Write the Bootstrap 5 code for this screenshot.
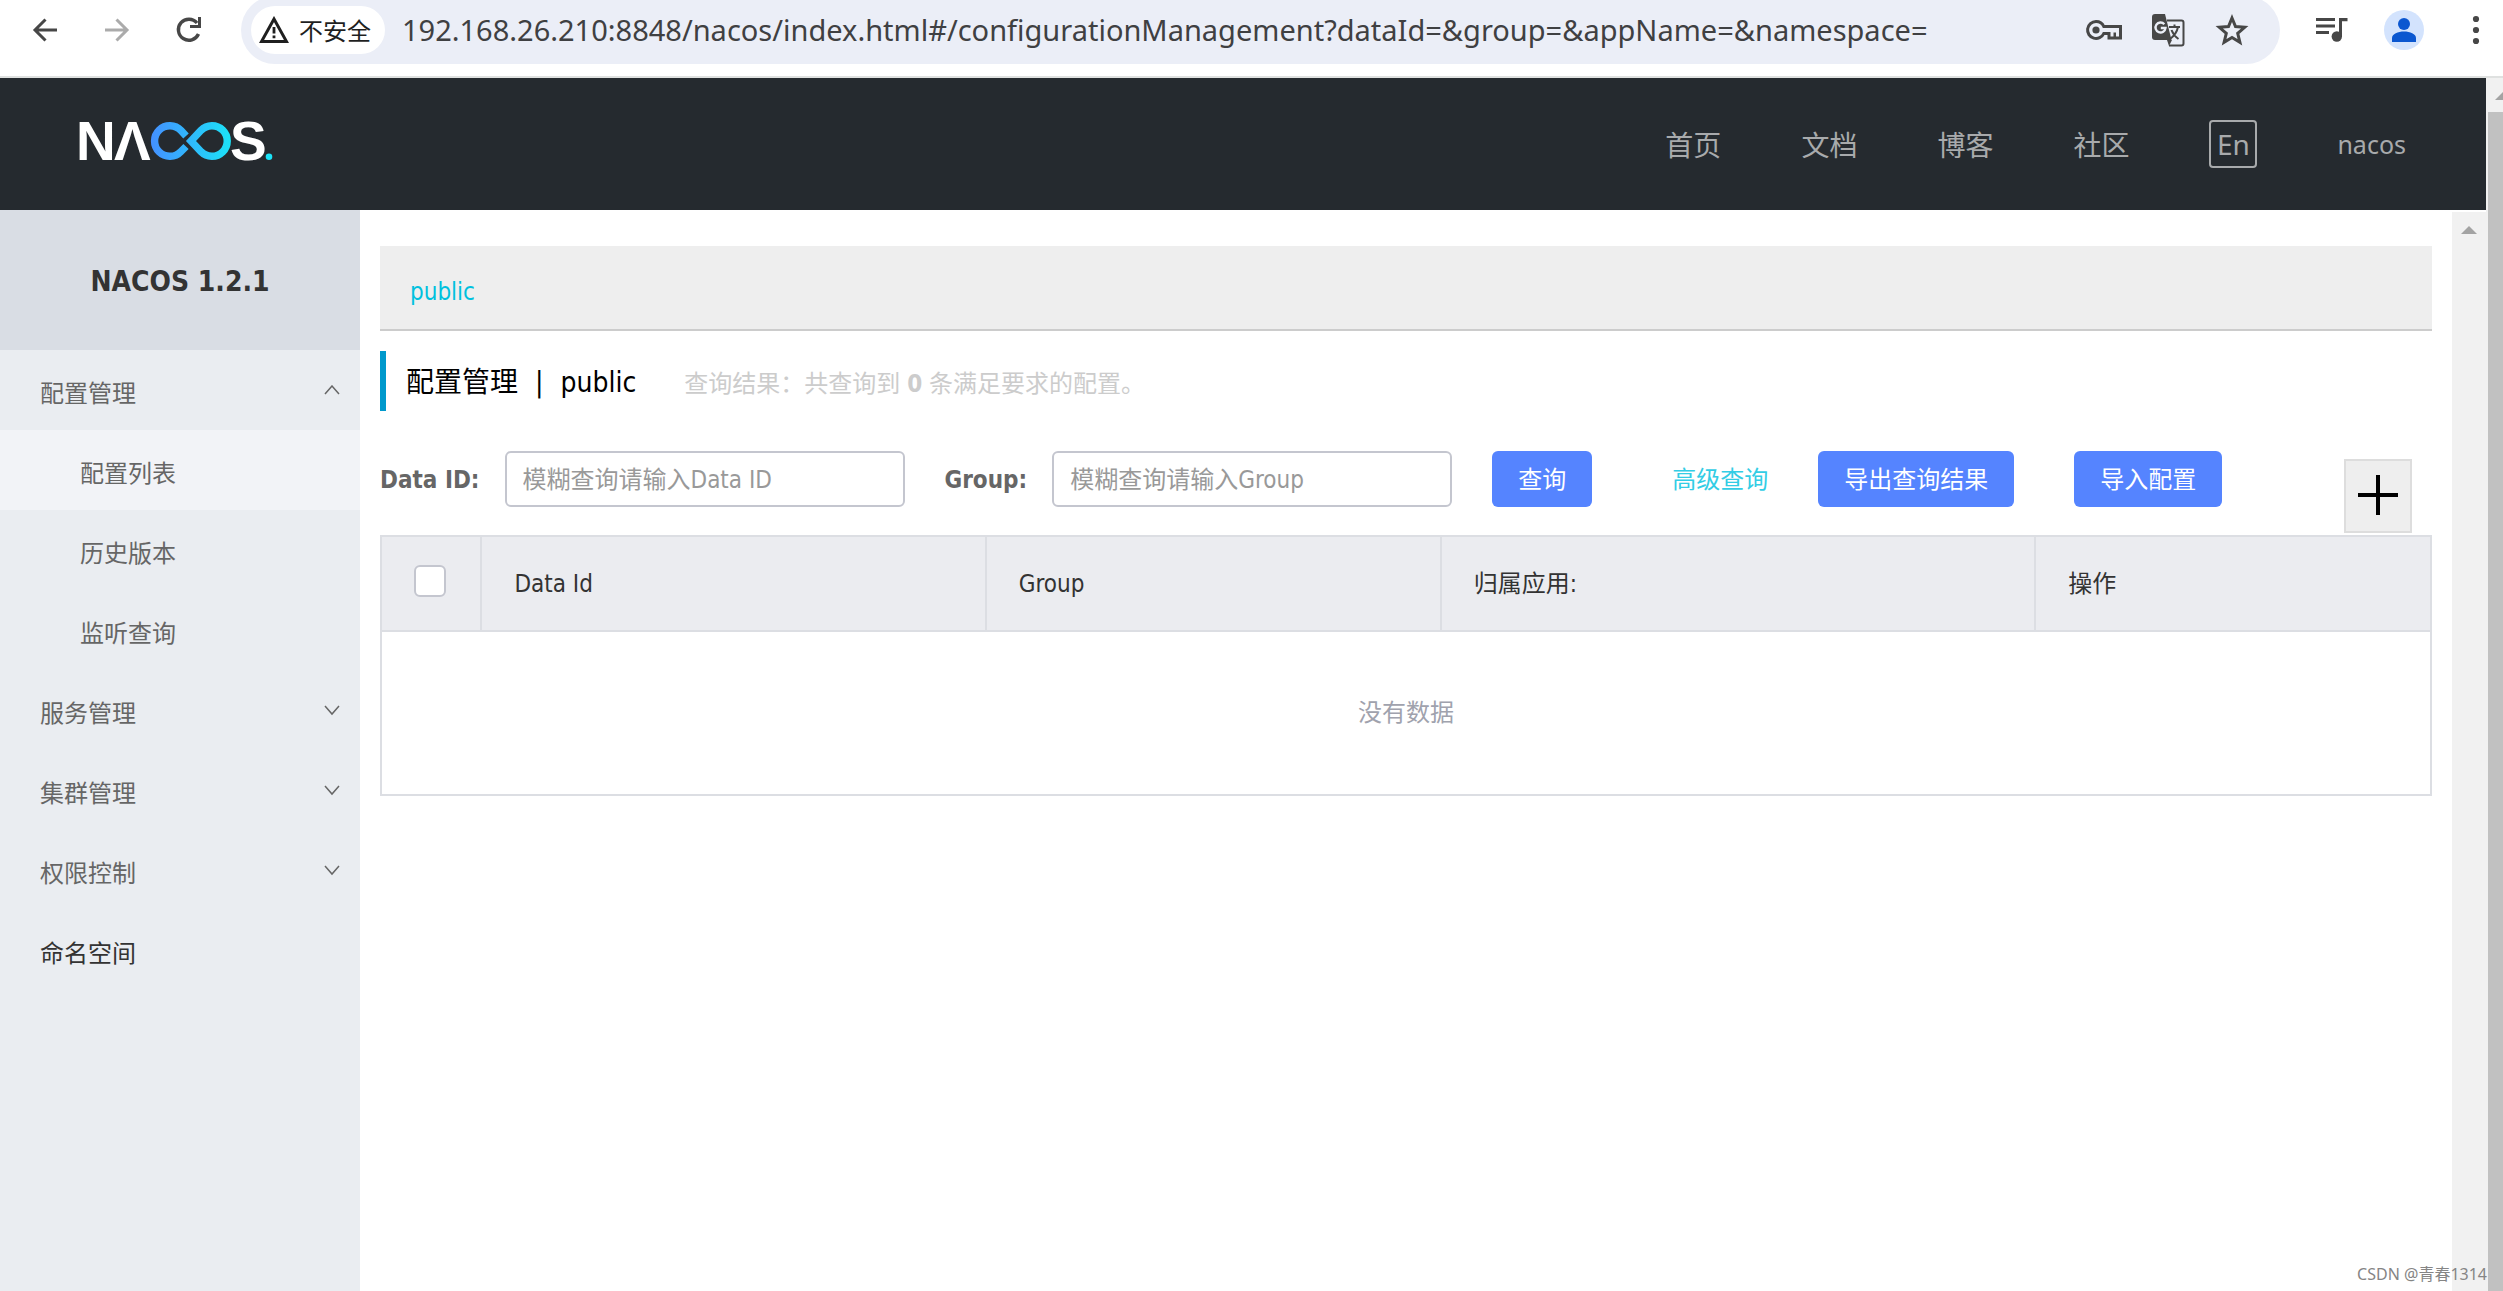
<!DOCTYPE html>
<html lang="zh-CN">
<head>
<meta charset="utf-8">
<meta name="viewport" content="width=device-width, initial-scale=1">
<title>Nacos</title>
<link href="https://cdn.jsdelivr.net/npm/bootstrap@5.3.0/dist/css/bootstrap.min.css" rel="stylesheet">
<style>
  :root { --ui: "DejaVu Sans Condensed", "Noto Sans CJK SC", sans-serif; --chrome: "Noto Sans", "Noto Sans CJK SC", sans-serif; }
  body { font-family: var(--ui); font-size: 24px; line-height: 36px; color: #333; overflow: hidden; }
  a { text-decoration: none; }

  /* browser toolbar */
  .toolbar { height: 78px; gap: 32px; padding: 0 7px 16px 25px; border-bottom: 2px solid #dfe1e0; font-family: var(--chrome); background: #fff; }
  .tool-btn { width: 40px; height: 40px; flex: none; padding: 0; border: 0; background: none; display: flex; align-items: center; justify-content: center; color: #474747; }
  .tool-btn:disabled { color: #ababab; }
  .omnibox { height: 68px; padding: 0 28px 0 10px; border-radius: 34px; background: #ebeef7; min-width: 0; }
  .site-chip { height: 48px; padding: 0 14px 0 8px; gap: 10px; border: 0; border-radius: 24px; background: #fff; color: #1f1f1f; font-size: 24px; line-height: 36px; flex: none; }
  .site-chip span { padding-top: 2px; }
  .url-field { min-width: 0; border: 0; outline: 0; padding: 0; margin-left: 17px; background: none; color: #3f4042; font-size: 29px; }
  .omni-icons { gap: 24px; }
  .avatar { border-radius: 50%; background: #d3e3fd; color: #0b57d0; }

  /* site header */
  .site-head { height: 132px; padding: 0 80px 0 74px; background: #252a2f; flex: none; }
  .brand { margin-top: -4px; }
  .site-nav { gap: 80px; }
  .site-nav a { padding-top: 2px; color: #a8aaac; font-size: 28px; line-height: 40px; font-family: var(--chrome); }
  .site-nav a.user { padding-top: 0; font-size: 25px; }
  .lang-btn { width: 48px; height: 48px; padding: 0; border: 2px solid #a8aaac; border-radius: 4px; background: none; color: #a8aaac; font: 28px/40px var(--chrome); }

  /* side menu */
  .side { width: 360px; flex: none; background: #eaedf1; }
  .side-title { height: 140px; padding-top: 4px; background: #d9dde4; font-size: 28px; font-weight: 700; color: #333; }
  .side a { height: 80px; padding: 8px 20px 0 40px; color: #666; }
  .side a svg { margin-bottom: 6px; }
  .side a.sub { padding-left: 80px; }
  .side a.current { background: #f2f3f7; }
  .side a.solo { color: #333; }

  /* main */
  .work { padding: 36px 20px 0; min-width: 0; }
  .ns-bar { height: 85px; padding: 8px 28px 0 30px; background: #eee; border-bottom: 2px solid #ccc; }
  .ns-bar a { color: #00c1de; }
  .page-title { height: 60px; margin-top: 20px; padding: 4px 0 0 20px; border-left: 6px solid #09c; }
  .page-title h1 { margin: 0; font-size: 28px; font-weight: 400; line-height: 40px; color: #000; gap: 17px; }
  .hint { margin-left: 48px; padding-top: 2px; color: #ccc; }
  .query { margin-top: 40px; }
  .query label { margin-right: 25px; padding-top: 2px; color: #666; font-weight: 700; }
  .query .form-control { width: 400px; height: 56px; margin-right: 40px; padding: 2px 16px 0; border: 2px solid #c4c6cf; border-radius: 6px; font-size: 24px; color: #333; }
  .query .form-control::placeholder { color: #999; }
  .query .btn { height: 56px; padding: 2px 26px 0; border: 0; border-radius: 6px; background: #5584ff; font-size: 24px; line-height: 36px; color: #fff; }
  .more { margin: 0 50px 0 80px; padding-top: 2px; color: #33cde5; }
  .query .import-btn { margin-left: 60px; }
  .add-btn { width: 68px; height: 74px; margin: 8px 20px 0 auto; padding: 0; border: 2px solid #ddd; background: #eee; }
  .grid-table { width: 100%; table-layout: fixed; margin: 2px 0 0; border: 2px solid #dcdee3; border-collapse: collapse; }
  .grid-table th { height: 95px; padding: 0 32px; font-weight: 400; background: #ebecf0; border: 2px solid #dcdee3; color: #333; }
  .grid-table td { height: 164px; text-align: center; color: #a0a2ad; }
  .grid-table .form-check-input { width: 32px; height: 32px; margin: -6px 0 0; border: 2px solid #c4c6cf; border-radius: 6px; display: block; }

  /* scroll bars */
  .bar-inner { width: 34px; margin-top: 2px; padding-top: 14px; background: #f1f1f1; flex: none; }
  .bar-outer { width: 17px; background: #f1f1f1; flex: none; overflow: hidden; }
  .bar-outer svg { margin: 14px 0 0 9px; flex: none; }
  .thumb { margin: 12px 0 0 2px; background: #c1c1c1; }
  .watermark { position: absolute; right: 16px; bottom: 6px; font: 16px/22px var(--chrome); color: #858585; }
</style>
<script src="https://cdn.jsdelivr.net/npm/bootstrap@5.3.0/dist/js/bootstrap.bundle.min.js"></script>
</head>
<body class="d-flex flex-column vh-100 position-relative">

<div class="toolbar d-flex align-items-center flex-shrink-0">
  <button class="tool-btn" aria-label="后退"><svg width="26" height="26" viewBox="0 0 26 26" fill="none" stroke="currentColor" stroke-width="3"><path d="M25 13H3M13.500 2.500L3 13l10.500 10.500"/></svg></button>
  <button class="tool-btn" aria-label="前进" disabled><svg width="26" height="26" viewBox="0 0 26 26" fill="none" stroke="currentColor" stroke-width="3"><path d="M1 13h22M12.500 2.500L23 13 12.500 23.500"/></svg></button>
  <button class="tool-btn" aria-label="刷新"><svg width="28" height="28" viewBox="0 0 28 28"><path d="M23.500 18A10.500 10.500 0 1 1 22 7" fill="none" stroke="currentColor" stroke-width="3.400"/><path d="M26 1v11H15v-3h8V1z" fill="currentColor"/></svg></button>
  <div class="omnibox d-flex align-items-center flex-grow-1">
    <button class="site-chip d-flex align-items-center"><svg width="30" height="28" viewBox="0 0 30 28"><path d="M15 3L27.500 25.500H2.500z" fill="none" stroke="currentColor" stroke-width="3"/><path d="M13.600 11h2.800v6.500h-2.800zM13.600 19.500h2.800v2.800h-2.800z" fill="currentColor"/></svg><span>不安全</span></button>
    <input class="url-field flex-grow-1" type="text" aria-label="地址" value="192.168.26.210:8848/nacos/index.html#/configurationManagement?dataId=&amp;group=&amp;appName=&amp;namespace=">
    <div class="omni-icons d-flex">
      <button class="tool-btn" aria-label="密码"><svg width="38" height="22" viewBox="0 0 38 22"><path d="M11 2.500a8.500 8.500 0 1 0 7.800 12H24V19h11.500V7.500H18.800A8.500 8.500 0 0 0 11 2.500z" fill="none" stroke="currentColor" stroke-width="3"/><circle cx="11" cy="11" r="3.600" fill="currentColor"/><path d="M28.500 13.500h2.500V18h-2.500z" fill="currentColor"/></svg></button>
      <button class="tool-btn" aria-label="翻译"><svg width="34" height="34" viewBox="0 0 34 34"><path d="M16 7.500h14.500a2 2 0 0 1 2 2v21a2 2 0 0 1-2 2H18" fill="none" stroke="currentColor" stroke-width="2"/><path d="M4 1h10l6.500 26H4a3 3 0 0 1-3-3V4a3 3 0 0 1 3-3z" fill="currentColor"/><path d="M16 27h5l-3 6z" fill="currentColor"/><path d="M18 14h11M23.500 11.500V14M27 14c-1 5-4 9-8 12M20.500 17c1.500 4 4 7 7 9" fill="none" stroke="currentColor" stroke-width="2"/><path d="M13.300 11.200A5 5 0 1 0 14.500 15H9.800" fill="none" stroke="#ebeef7" stroke-width="2.400"/></svg></button>
      <button class="tool-btn" aria-label="收藏"><svg width="34" height="34" viewBox="0 0 34 34"><path d="M17 5l3.500 8.600 9.200.7-7 6 2.200 9L17 24.400l-7.900 4.900 2.200-9-7-6 9.200-.7z" fill="none" stroke="currentColor" stroke-width="3"/></svg></button>
    </div>
  </div>
  <button class="tool-btn" aria-label="媒体控制"><svg width="32" height="26" viewBox="0 0 32 26" fill="currentColor"><path d="M0 1h19v3H0zM0 7.500h19v3H0zM0 14h13v3H0zM23 1h8.500v3.200H26V20h-3z"/><circle cx="20.800" cy="19.500" r="5.200"/></svg></button>
  <button class="tool-btn avatar" aria-label="个人资料"><svg width="26" height="26" viewBox="0 0 26 26" fill="currentColor"><circle cx="13" cy="7" r="6"/><path d="M1 25v-4c0-4 6-6.500 12-6.500S25 17 25 21v4z"/></svg></button>
  <button class="tool-btn" aria-label="菜单"><svg width="8" height="30" viewBox="0 0 8 30" fill="currentColor"><circle cx="4" cy="4" r="3.100"/><circle cx="4" cy="15" r="3.100"/><circle cx="4" cy="26" r="3.100"/></svg></button>
</div>

<div class="d-flex flex-grow-1">
  <div class="d-flex flex-column flex-grow-1">
    <header class="site-head d-flex align-items-center justify-content-between">
      <a href="#" class="brand d-flex" aria-label="NACOS">
        <svg width="206" height="68" viewBox="-6 -14 206 68">
          <defs><linearGradient id="loop" gradientUnits="userSpaceOnUse" x1="71" y1="0" x2="151" y2="0"><stop offset="0" stop-color="#4490ff"/><stop offset="1" stop-color="#1be3f8"/></linearGradient></defs>
          <g fill="#fff" font-family="Liberation Sans, sans-serif" font-weight="700" font-size="55"><text x="-4" y="38">N</text><text x="34" y="38">Λ</text><text x="150" y="38">S</text></g>
          <g fill="none" stroke="url(#loop)" stroke-width="7.400"><path d="M106 14L101 8.500A15.300 15.300 0 1 0 101 29.500L106 24.500"/><path d="M111 19L121 8.300A15.300 15.300 0 1 1 121 29.700Z"/></g>
          <circle cx="189" cy="34.700" r="3.300" fill="#1be3f8"/>
        </svg>
      </a>
      <nav class="site-nav d-flex align-items-center">
        <a href="#">首页</a><a href="#">文档</a><a href="#">博客</a><a href="#">社区</a>
        <button class="lang-btn">En</button>
        <a href="#" class="user">nacos</a>
      </nav>
    </header>

    <div class="d-flex flex-grow-1">
      <nav class="side d-flex flex-column">
        <div class="side-title d-flex align-items-center justify-content-center">NACOS 1.2.1</div>
        <a href="#" class="d-flex align-items-center justify-content-between">配置管理<svg width="16" height="12" viewBox="0 0 16 12" fill="none" stroke="currentColor" stroke-width="1.500"><path d="M1 9l7-8 7 8"/></svg></a>
        <a href="#" class="sub current d-flex align-items-center">配置列表</a>
        <a href="#" class="sub d-flex align-items-center">历史版本</a>
        <a href="#" class="sub d-flex align-items-center">监听查询</a>
        <a href="#" class="d-flex align-items-center justify-content-between">服务管理<svg width="16" height="12" viewBox="0 0 16 12" fill="none" stroke="currentColor" stroke-width="1.500"><path d="M1 1l7 8 7-8"/></svg></a>
        <a href="#" class="d-flex align-items-center justify-content-between">集群管理<svg width="16" height="12" viewBox="0 0 16 12" fill="none" stroke="currentColor" stroke-width="1.500"><path d="M1 1l7 8 7-8"/></svg></a>
        <a href="#" class="d-flex align-items-center justify-content-between">权限控制<svg width="16" height="12" viewBox="0 0 16 12" fill="none" stroke="currentColor" stroke-width="1.500"><path d="M1 1l7 8 7-8"/></svg></a>
        <a href="#" class="solo d-flex align-items-center">命名空间</a>
      </nav>

      <main class="work flex-grow-1">
        <div class="ns-bar d-flex align-items-center"><a href="#">public</a></div>
        <div class="page-title d-flex align-items-center">
          <h1 class="d-flex"><span>配置管理</span><span>|</span><span>public</span></h1>
          <span class="hint">查询结果：共查询到 <strong>0</strong> 条满足要求的配置。</span>
        </div>
        <form class="query d-flex align-items-start">
          <div class="d-flex align-items-center flex-grow-1">
            <label for="dataId">Data ID:</label>
            <input id="dataId" class="form-control" type="text" placeholder="模糊查询请输入Data ID">
            <label for="group">Group:</label>
            <input id="group" class="form-control" type="text" placeholder="模糊查询请输入Group">
            <button type="button" class="btn">查询</button>
            <a href="#" class="more">高级查询</a>
            <button type="button" class="btn">导出查询结果</button>
            <button type="button" class="btn import-btn">导入配置</button>
          </div>
          <button type="button" class="add-btn" aria-label="新建配置"><svg width="44" height="44" viewBox="0 0 44 44" stroke="#000" stroke-width="4"><path d="M2 21h40M22 1v40"/></svg></button>
        </form>
        <table class="grid-table">
          <colgroup><col style="width:4.900%"><col style="width:24.600%"><col style="width:22.200%"><col style="width:29%"><col></colgroup>
          <thead><tr><th scope="col"><input class="form-check-input" type="checkbox" aria-label="全选"></th><th scope="col">Data Id</th><th scope="col">Group</th><th scope="col">归属应用:</th><th scope="col">操作</th></tr></thead>
          <tbody><tr><td colspan="5">没有数据</td></tr></tbody>
        </table>
      </main>
      <div class="bar-inner d-flex justify-content-center"><svg width="16" height="8" viewBox="0 0 16 8"><path d="M0 8l8-8 8 8z" fill="#a3a3a3"/></svg></div>
    </div>
  </div>
  <div class="bar-outer d-flex flex-column">
    <svg width="20" height="8" viewBox="0 0 20 8"><path d="M0 8l8-8 8 8z" fill="#a3a3a3"/></svg>
    <div class="thumb flex-grow-1"></div>
  </div>
</div>
<div class="watermark">CSDN @青春1314</div>
</body>
</html>
